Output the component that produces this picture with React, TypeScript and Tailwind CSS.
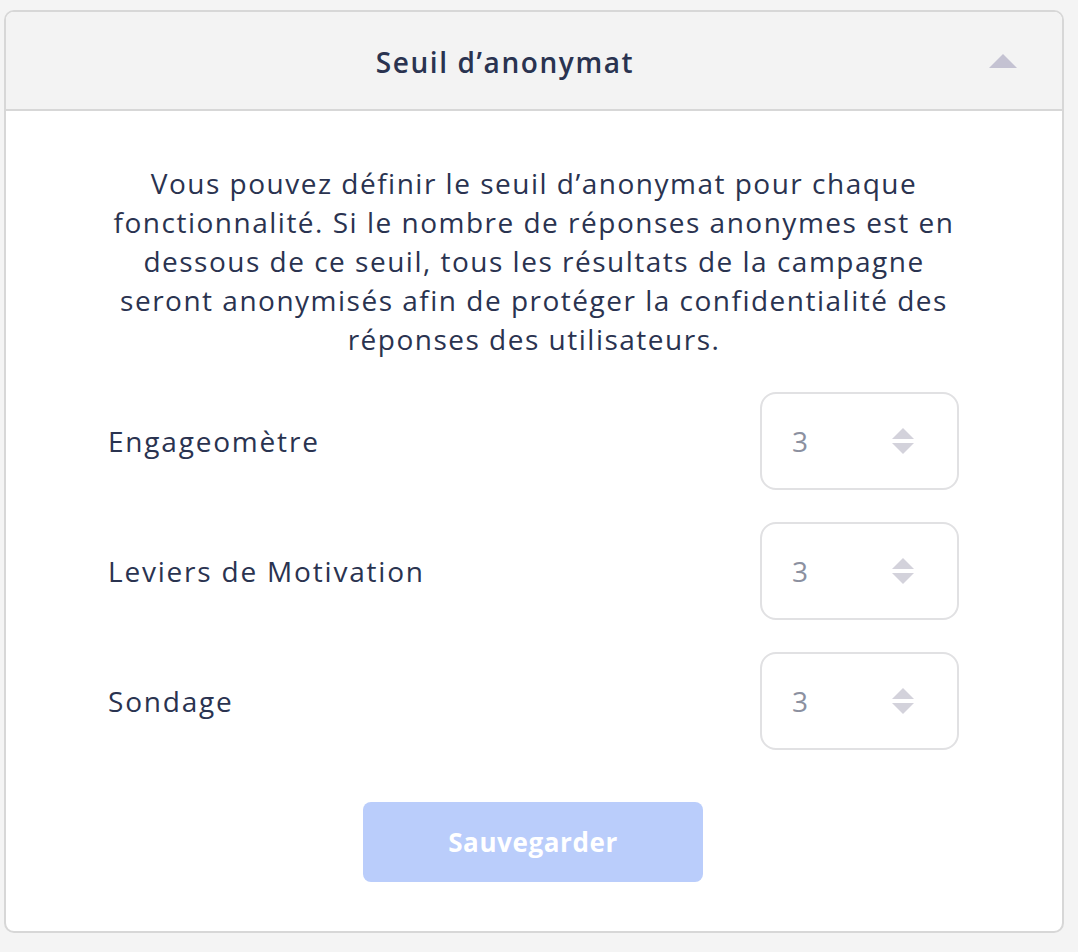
import React from "react";

const rows = ["Engageomètre", "Leviers de Motivation", "Sondage"];

const intro = [
  "Vous pouvez définir le seuil d’anonymat pour chaque",
  "fonctionnalité. Si le nombre de réponses anonymes est en",
  "dessous de ce seuil, tous les résultats de la campagne",
  "seront anonymisés afin de protéger la confidentialité des",
  "réponses des utilisateurs.",
];

function Spinner() {
  return (
    <svg width="24" height="28" viewBox="0 0 24 28" className="text-[#d3d2db]">
      <path d="M12 1 L23 12 L1 12 Z" fill="currentColor" />
      <path d="M1 16 L23 16 L12 27 Z" fill="currentColor" />
    </svg>
  );
}

export default function App() {
  return (
    <div className="min-h-[952px] w-[1078px] bg-[#f4f4f4] pt-[10px] pl-[4px] font-['Open_Sans',sans-serif] text-[#2a3350]">
      <div className="w-[1060px] overflow-hidden rounded-[10px] border-2 border-[#d7d7d7] bg-white">
        {/* Header */}
        <div className="relative flex h-[99px] items-center justify-center border-b-2 border-[#d7d7d7] bg-[#f3f3f3] pr-[58px] pt-[2px]">
          <h2 className="text-[28px] font-semibold tracking-[1.6px]">Seuil d’anonymat</h2>
          <svg
            width="30"
            height="16"
            viewBox="0 0 30 16"
            className="absolute right-[44px] top-[41px] text-[#c4c2d2]"
          >
            <path d="M15 1 L29 15 L1 15 Z" fill="currentColor" />
          </svg>
        </div>

        {/* Body */}
        <div className="px-[102px] pb-[49px] pt-[53px]">
          <p className="text-center text-[28px] leading-[39px] tracking-[1.5px]">
            {intro.map((line) => (
              <span key={line} className="block">
                {line}
              </span>
            ))}
          </p>

          <div className="mt-[33px] flex flex-col gap-[32px]">
            {rows.map((label) => (
              <div key={label} className="flex items-center justify-between">
                <span className="text-[28px] tracking-[1.8px]">{label}</span>
                <div className="mr-[1px] flex h-[98px] w-[199px] items-center justify-between rounded-[16px] border-2 border-[#e1e1e3] pl-[30px] pr-[42px]">
                  <span className="text-[28px] text-[#8b90a0]">3</span>
                  <Spinner />
                </div>
              </div>
            ))}
          </div>

          <div className="mt-[52px] flex justify-center">
            <button className="-translate-x-[1px] h-[80px] w-[340px] rounded-[8px] bg-[#bacdfb] text-[26px] font-bold tracking-[0.6px] text-white">
              Sauvegarder
            </button>
          </div>
        </div>
      </div>
    </div>
  );
}
